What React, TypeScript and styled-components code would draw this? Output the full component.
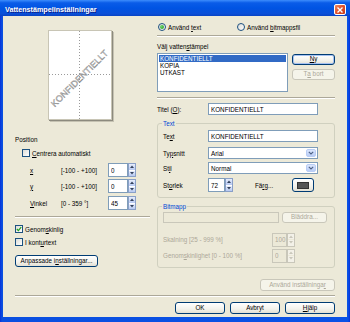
import styled, { createGlobalStyle } from "styled-components";

const GlobalStyle = createGlobalStyle`
  * { box-sizing: border-box; }
  body {
    margin: 0;
    background: #fff;
    font-family: "Liberation Sans", Tahoma, Arial, sans-serif;
    font-size: 6.3px;
    color: #000;
  }
`;

const Window = styled.div`
  width: 350px;
  height: 322px;
  display: flex;
  flex-direction: column;
  background: linear-gradient(to right, #0831d9, #0a4fe0 2px, #0a52e6 348px, #0831d9);
`;

const TitleBar = styled.div`
  height: 16px;
  padding: 3px 4px 0 5px;
  display: flex;
  align-items: center;
  justify-content: space-between;
  background: linear-gradient(to bottom, #3d8dfc 0%, #0a5ce8 18%, #0054e3 50%, #0a4fd8 85%, #0843c4 100%);
`;

const Title = styled.span`
  color: #fff;
  font-weight: bold;
  font-size: 7.2px;
  text-shadow: 1px 1px 0 #0a1e8a;
`;

const CloseBox = styled.div`
  width: 12px;
  height: 11px;
  border: 1px solid #fff;
  border-radius: 2px;
  background: linear-gradient(135deg, #f08a60, #e0502a 50%, #c83c18);
  display: flex;
  align-items: center;
  justify-content: center;
`;

const Body = styled.div`
  flex: 1;
  margin: 0 3px 5px;
  padding: 0 12px;
  background: #ece9d8;
  display: flex;
  flex-direction: column;
`;

const Columns = styled.div`
  display: flex;
  gap: 7px;
  align-items: flex-start;
`;

const LeftCol = styled.div`
  width: 135px;
  display: flex;
  flex-direction: column;
`;

const RightCol = styled.div`
  width: 178px;
  display: flex;
  flex-direction: column;
`;

const Etched = styled.div<{ $top: number }>`
  height: 2px;
  margin-top: ${(p) => p.$top}px;
  border-top: 1px solid #aca899;
  border-bottom: 1px solid #fff;
`;

const U = styled.span`
  text-decoration: underline;
`;

const Caption = styled.div<{ $top: number; $left?: number }>`
  margin-top: ${(p) => p.$top}px;
  margin-left: ${(p) => p.$left ?? 0}px;
  height: 7px;
  line-height: 7px;
  white-space: nowrap;
`;

/* preview */
const Paper = styled.div`
  margin: 14px 0 0 33px;
  width: 64px;
  height: 90px;
  background: #fff;
  border: 1px solid #c8c5b5;
  box-shadow: 1px 1px 0 #8c8a7e, 2px 2px 0 #c5c2b2;
  svg { display: block; }
`;

/* checkbox and radio */
const OptionRow = styled.div<{ $top: number; $left?: number }>`
  display: flex;
  align-items: center;
  height: 8px;
  margin-top: ${(p) => p.$top}px;
  margin-left: ${(p) => p.$left ?? 0}px;
  white-space: nowrap;
`;

const CheckBox = styled.span`
  width: 8px;
  height: 8px;
  margin-right: 2px;
  border: 1px solid #1c5180;
  background: linear-gradient(135deg, #dcdcd7, #fff);
  display: inline-flex;
  align-items: center;
  justify-content: center;
  flex-shrink: 0;
`;

const RadioRow = styled.div`
  margin-top: 6px;
  height: 10px;
  padding-left: 1px;
  display: grid;
  grid-template-columns: 79px 1fr;
  align-items: center;
`;

const Radio = styled.label`
  display: flex;
  align-items: center;
  white-space: nowrap;
`;

const RadioDot = styled.span<{ $on?: boolean }>`
  width: 8px;
  height: 8px;
  margin-right: 2px;
  border-radius: 50%;
  border: 1px solid #1c5180;
  background: linear-gradient(135deg, #dcdcd7, #fff);
  display: inline-flex;
  align-items: center;
  justify-content: center;
  &::after {
    content: "";
    width: 4px;
    height: 4px;
    border-radius: 50%;
    background: ${(p) => (p.$on ? "radial-gradient(circle at 35% 35%, #6fd36f, #1a9a1a)" : "transparent")};
  }
`;

/* buttons */
const XpButton = styled.button<{ $w: number; $h?: number; $off?: boolean; $focus?: boolean }>`
  width: ${(p) => p.$w}px;
  height: ${(p) => p.$h ?? 12}px;
  padding: 0;
  font: inherit;
  line-height: 1;
  white-space: pre;
  color: ${(p) => (p.$off ? "#aca899" : "#000")};
  border: 1px solid ${(p) => (p.$off ? "#c9c7ba" : "#003c74")};
  border-radius: 3px;
  background: ${(p) =>
    p.$off ? "#f5f4ea" : "linear-gradient(to bottom, #fff 0%, #f3f2ec 60%, #e3e0d4 100%)"};
  box-shadow: ${(p) => (p.$focus ? "inset 0 0 0 1px #a6c1f0" : "none")};
  display: flex;
  align-items: center;
  justify-content: center;
  flex-shrink: 0;
`;

/* list */
const ListRow = styled.div`
  margin-top: 3px;
  display: flex;
  gap: 4px;
`;

const ListBox = styled.div`
  width: 131px;
  height: 39px;
  padding: 1px;
  border: 1px solid #7f9db9;
  background: #fff;
`;

const ListItem = styled.div<{ $selected?: boolean }>`
  height: 7px;
  line-height: 7px;
  padding-left: 1px;
  background: ${(p) => (p.$selected ? "#316ac5" : "transparent")};
  color: ${(p) => (p.$selected ? "#fff" : "#000")};
`;

const ButtonStack = styled.div`
  padding-top: 1px;
  display: flex;
  flex-direction: column;
  gap: 4px;
`;

/* fields */
const FieldRow = styled.div<{ $top: number; $h?: number }>`
  display: flex;
  align-items: center;
  height: ${(p) => p.$h ?? 12}px;
  margin-top: ${(p) => p.$top}px;
  white-space: nowrap;
`;

const FieldLabel = styled.span<{ $w: number; $off?: boolean; $indent?: number }>`
  width: ${(p) => p.$w}px;
  padding-left: ${(p) => p.$indent ?? 0}px;
  flex-shrink: 0;
  color: ${(p) => (p.$off ? "#aca899" : "#000")};
`;

const TextBox = styled.input<{ $w: number; $h?: number; $off?: boolean }>`
  width: ${(p) => p.$w}px;
  height: ${(p) => p.$h ?? 12}px;
  padding: 0 0 0 2px;
  font: inherit;
  color: ${(p) => (p.$off ? "#aca899" : "#000")};
  border: 1px solid ${(p) => (p.$off ? "#c9c7ba" : "#7f9db9")};
  background: ${(p) => (p.$off ? "#ece9d8" : "#fff")};
  outline: none;
  flex-shrink: 0;
`;

const Select = styled.div`
  width: 110px;
  height: 12px;
  border: 1px solid #7f9db9;
  background: #fff;
  display: flex;
  align-items: center;
  padding: 1px;
`;

const SelectValue = styled.span`
  flex: 1;
  padding-left: 1px;
`;

const SelectArrow = styled.span`
  width: 10px;
  height: 8px;
  border-radius: 2px;
  border: 1px solid #b9cdf5;
  background: linear-gradient(to bottom, #dbe6fd, #b9cdf6);
  display: flex;
  align-items: center;
  justify-content: center;
`;

const Spinner = styled.div`
  display: flex;
  height: 14px;
  flex-shrink: 0;
`;

const SpinButtons = styled.div<{ $off?: boolean }>`
  width: 8px;
  height: 14px;
  display: flex;
  flex-direction: column;
  gap: 1px;
  border: 1px solid ${(p) => (p.$off ? "#c9c7ba" : "#8aa0c8")};
  background: ${(p) => (p.$off ? "#ece9d8" : "#fff")};
`;

const SpinHalf = styled.span<{ $off?: boolean }>`
  flex: 1;
  display: flex;
  align-items: center;
  justify-content: center;
  background: ${(p) => (p.$off ? "#f3f1e8" : "linear-gradient(to bottom, #e8eefc, #b7c9f2)")};
`;

/* groups */
const Group = styled.div<{ $top: number }>`
  position: relative;
  margin-top: ${(p) => p.$top}px;
  border: 1px solid #d0d0bf;
  border-radius: 3px;
  padding: 6px 5px 5px;
  display: flex;
  flex-direction: column;
`;

const Legend = styled.span`
  position: absolute;
  top: -4px;
  left: 4px;
  padding: 0 1px;
  line-height: 7px;
  background: #ece9d8;
  color: #0046d5;
`;

const ColorSwatch = styled.span`
  width: 12px;
  height: 7px;
  background: #555;
  border: 1px solid #333;
`;

const Footer = styled.div`
  margin-top: 5px;
  display: flex;
  justify-content: flex-end;
  gap: 5px;
`;

const Chevron = () => (
  <svg width="6" height="4" viewBox="0 0 6 4">
    <path d="M0.8 0.8 L3 3 L5.2 0.8" fill="none" stroke="#4d6185" strokeWidth="1.1" />
  </svg>
);

const Arrow = ({ up, off }: { up?: boolean; off?: boolean }) => (
  <svg width="4" height="3" viewBox="0 0 4 3">
    <path d={up ? "M0 3 L2 0.5 L4 3 Z" : "M0 0 L2 2.5 L4 0 Z"} fill={off ? "#c9c7ba" : "#33415c"} />
  </svg>
);

const Spin = ({ value, w, off }: { value: string; w: number; off?: boolean }) => (
  <Spinner>
    <TextBox $w={w} $h={14} $off={off} defaultValue={value} readOnly />
    <SpinButtons $off={off}>
      <SpinHalf $off={off}>
        <Arrow up off={off} />
      </SpinHalf>
      <SpinHalf $off={off}>
        <Arrow off={off} />
      </SpinHalf>
    </SpinButtons>
  </Spinner>
);

const Tick = () => (
  <svg width="6" height="6" viewBox="0 0 6 6">
    <path d="M0.8 3 L2.4 4.6 L5.2 1.2" fill="none" stroke="#21a121" strokeWidth="1.3" />
  </svg>
);

const App = () => {
  return (
    <>
      <GlobalStyle />
      <Window>
        <TitleBar>
          <Title>Vattenstämpelinställningar</Title>
          <CloseBox>
            <svg width="6" height="6" viewBox="0 0 6 6">
              <path d="M0.5 0.5 L5.5 5.5 M5.5 0.5 L0.5 5.5" stroke="#fff" strokeWidth="1.4" />
            </svg>
          </CloseBox>
        </TitleBar>
        <Body>
          <Columns>
            <LeftCol>
              <Paper>
                <svg width="62" height="88" viewBox="0 0 62 88">
                  <line x1="30.5" y1="0" x2="30.5" y2="88" stroke="#9a9a9a" strokeDasharray="1 2" />
                  <line x1="0" y1="43.5" x2="62" y2="43.5" stroke="#9a9a9a" strokeDasharray="1 2" />
                  <text
                    x="31"
                    y="48"
                    transform="rotate(-45 31 48)"
                    textAnchor="middle"
                    dominantBaseline="middle"
                    fontSize="9.1"
                    fontFamily="Liberation Sans, Arial, sans-serif"
                    fill="#d2d2d2"
                    stroke="#7a7a7a"
                    strokeWidth="0.35"
                  >
                    KONFIDENTIELLT
                  </text>
                </svg>
              </Paper>
              <Caption $top={16}>Position</Caption>
              <OptionRow $top={6} $left={7}>
                <CheckBox />
                <span>
                  <U>C</U>entrera automatiskt
                </span>
              </OptionRow>
              <FieldRow $top={6} $h={14}>
                <FieldLabel $w={46} $indent={15}>
                  <U>x</U>
                </FieldLabel>
                <FieldLabel $w={47}>[-100 - +100]</FieldLabel>
                <Spin value="0" w={20} />
              </FieldRow>
              <FieldRow $top={2} $h={14}>
                <FieldLabel $w={46} $indent={15}>
                  <U>y</U>
                </FieldLabel>
                <FieldLabel $w={47}>[-100 - +100]</FieldLabel>
                <Spin value="0" w={20} />
              </FieldRow>
              <FieldRow $top={3} $h={14}>
                <FieldLabel $w={46} $indent={15}>
                  <U>V</U>inkel
                </FieldLabel>
                <FieldLabel $w={47}>[0 - 359 °]</FieldLabel>
                <Spin value="45" w={20} />
              </FieldRow>
              <Etched $top={6} />
              <OptionRow $top={7}>
                <CheckBox>
                  <Tick />
                </CheckBox>
                <span>
                  Genom<U>s</U>kinlig
                </span>
              </OptionRow>
              <OptionRow $top={5}>
                <CheckBox />
                <span>
                  I kont<U>u</U>rtext
                </span>
              </OptionRow>
              <XpButton $w={83} style={{ marginTop: 9 }}>
                Anpassade i<U>n</U>ställningar...
              </XpButton>
            </LeftCol>

            <RightCol>
              <RadioRow>
                <Radio>
                  <RadioDot $on />
                  <span>
                    Använd <U>t</U>ext
                  </span>
                </Radio>
                <Radio>
                  <RadioDot />
                  <span>
                    Använd <U>b</U>itmappsfil
                  </span>
                </Radio>
              </RadioRow>
              <Etched $top={3} />
              <Caption $top={6}>
                Välj vatten<U>s</U>tämpel
              </Caption>
              <ListRow>
                <ListBox>
                  <ListItem $selected>KONFIDENTIELLT</ListItem>
                  <ListItem>KOPIA</ListItem>
                  <ListItem>UTKAST</ListItem>
                </ListBox>
                <ButtonStack>
                  <XpButton $w={43} $h={11} $focus>
                    <U>N</U>y
                  </XpButton>
                  <XpButton $w={43} $h={11} $off>
                    T<U>a</U>{" bort"}
                  </XpButton>
                </ButtonStack>
              </ListRow>
              <Etched $top={5} />
              <FieldRow $top={4}>
                <FieldLabel $w={51}>
                  Titel (<U>O</U>):
                </FieldLabel>
                <TextBox $w={110} defaultValue="KONFIDENTIELLT" readOnly />
              </FieldRow>

              <Group $top={8}>
                <Legend>Text</Legend>
                <FieldRow $top={0}>
                  <FieldLabel $w={45}>
                    Te<U>x</U>t
                  </FieldLabel>
                  <TextBox $w={110} defaultValue="KONFIDENTIELLT" readOnly />
                </FieldRow>
                <FieldRow $top={5}>
                  <FieldLabel $w={45}>
                    Ty<U>p</U>snitt
                  </FieldLabel>
                  <Select>
                    <SelectValue>Arial</SelectValue>
                    <SelectArrow>
                      <Chevron />
                    </SelectArrow>
                  </Select>
                </FieldRow>
                <FieldRow $top={3}>
                  <FieldLabel $w={45}>
                    St<U>i</U>l
                  </FieldLabel>
                  <Select>
                    <SelectValue>Normal</SelectValue>
                    <SelectArrow>
                      <Chevron />
                    </SelectArrow>
                  </Select>
                </FieldRow>
                <FieldRow $top={4} $h={14}>
                  <FieldLabel $w={45}>
                    St<U>o</U>rlek
                  </FieldLabel>
                  <Spin value="72" w={17} />
                  <FieldLabel $w={59} $indent={22}>
                    Fä<U>r</U>g...
                  </FieldLabel>
                  <XpButton $w={22} $h={14}>
                    <ColorSwatch />
                  </XpButton>
                </FieldRow>
              </Group>

              <Group $top={8}>
                <Legend>Bitmapp</Legend>
                <FieldRow $top={-1} $h={11}>
                  <TextBox $w={116} $h={11} $off readOnly />
                  <XpButton $w={45} $h={11} $off style={{ marginLeft: 3 }}>
                    Bläddra...
                  </XpButton>
                </FieldRow>
                <FieldRow $top={10} $h={13}>
                  <FieldLabel $w={109} $off>
                    Skalning [25 - 999 %]
                  </FieldLabel>
                  <Spin value="100" w={15} off />
                </FieldRow>
                <FieldRow $top={3} $h={13}>
                  <FieldLabel $w={109} $off>
                    Genom<U>s</U>kinlighet [0 - 100 %]
                  </FieldLabel>
                  <Spin value="0" w={15} off />
                </FieldRow>
              </Group>

              <XpButton $w={75} $off style={{ marginTop: 11, alignSelf: "flex-end" }}>
                Använd inställninga<U>r</U>
              </XpButton>
            </RightCol>
          </Columns>
          <Etched $top={4} />
          <Footer>
            <XpButton $w={50}>OK</XpButton>
            <XpButton $w={50}>Avbryt</XpButton>
            <XpButton $w={50}>
              <U>H</U>jälp
            </XpButton>
          </Footer>
        </Body>
      </Window>
    </>
  );
};

export default App;
